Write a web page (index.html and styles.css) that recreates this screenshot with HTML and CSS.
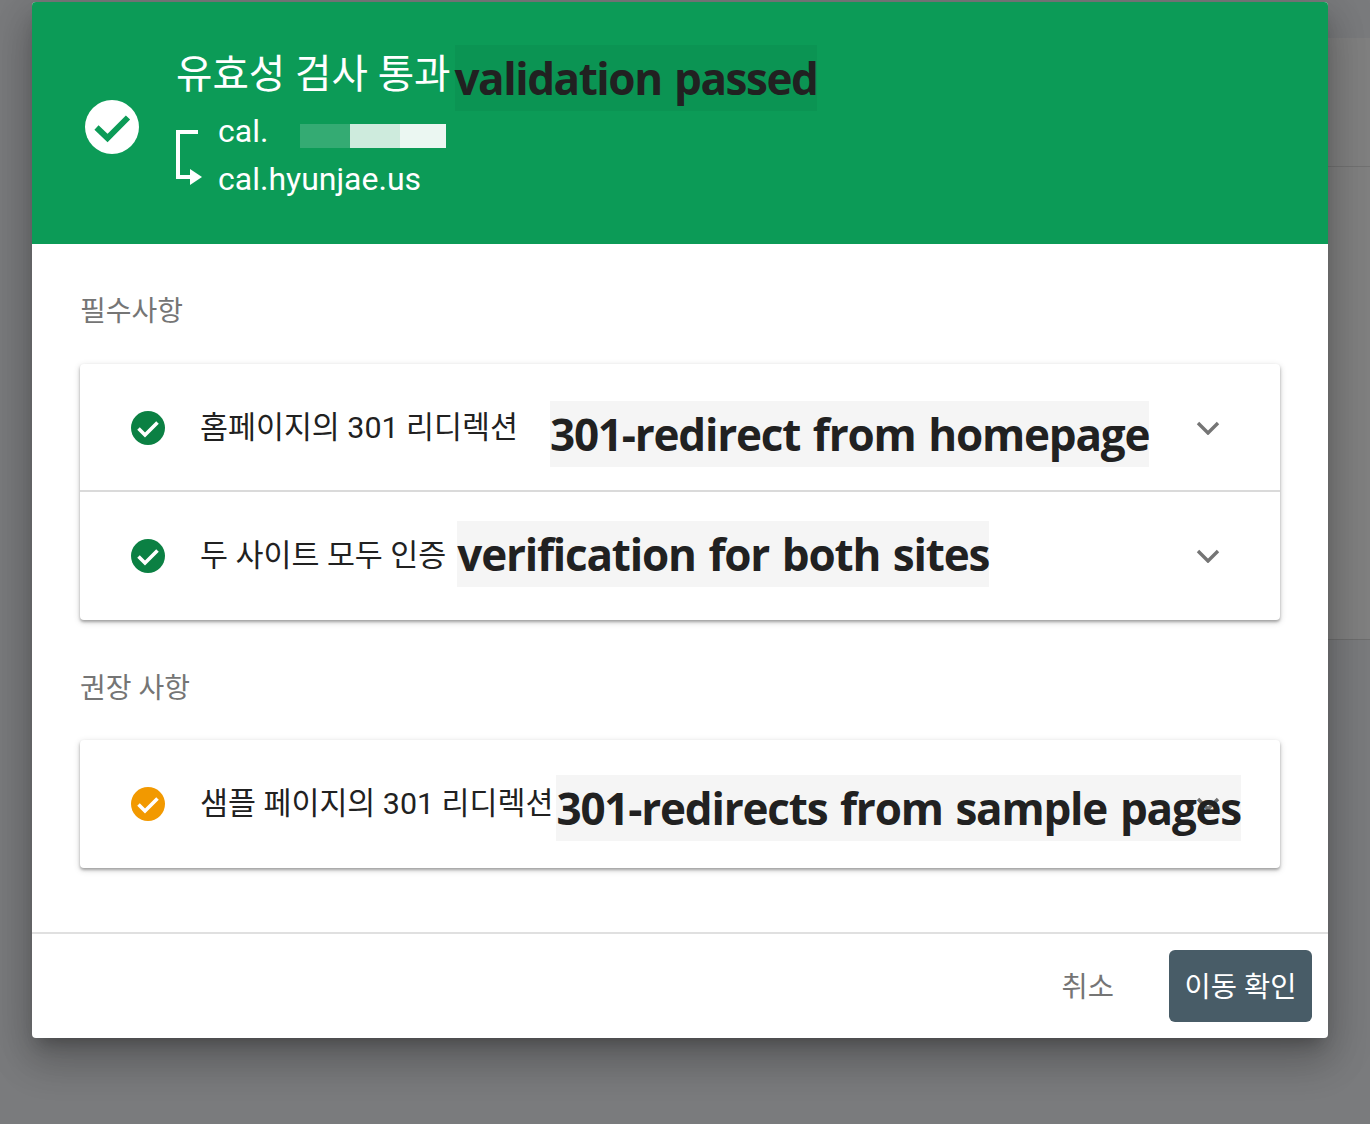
FILE: index.html
```html
<!DOCTYPE html>
<html lang="ko">
<head>
    <meta charset="UTF-8">
    <title>유효성 검사 통과</title>
    <link rel="stylesheet" href="styles.css">
</head>
<body>
    <div class="back-page"></div>
    <div class="dialog">
        <div class="dialog-head">
            <svg class="head-check" width="54" height="54" viewBox="0 0 54 54">
                <circle cx="27" cy="27" r="27" fill="#fff"/>
                <path d="M11.5 27.5 L22.5 38 L43 17.5" fill="none" stroke="#0c9b57" stroke-width="6"/>
            </svg>
            <div class="head-text">
                <div class="head-title">유효성 검사 통과<span class="tr tr-title">validation passed</span></div>
                <div class="head-sites">
                    <svg class="move-arrow" width="28" height="56" viewBox="0 0 28 56">
                        <path d="M22 2 H2 V47 H16" fill="none" stroke="#fff" stroke-width="4"/>
                        <path d="M14 39 L26 47 L14 55 Z" fill="#fff"/>
                    </svg>
                    <div class="site-names">
                        <div class="site-old">cal.<span class="blur-box"><i class="blur-a"></i><i class="blur-b"></i><i class="blur-c"></i></span></div>
                        <div>cal.hyunjae.us</div>
                    </div>
                </div>
            </div>
        </div>

        <div class="dialog-body">
            <div class="section-label">필수사항</div>
            <div class="card">
                <div class="row">
                    <svg class="row-icon" width="34" height="34" viewBox="0 0 34 34">
                        <circle cx="17" cy="17" r="17" fill="#0b8043"/>
                        <path d="M7.5 17.5 L14 24 L26.5 11.5" fill="none" stroke="#fff" stroke-width="3.6"/>
                    </svg>
                    <span class="row-text">홈페이지의 301 리디렉션</span>
                    <span class="tr tr-one">301-redirect from homepage</span>
                    <svg class="chevron" width="24" height="14" viewBox="0 0 24 14">
                        <path d="M2 2 L12 12 L22 2" fill="none" stroke="#757575" stroke-width="3.4"/>
                    </svg>
                </div>
                <div class="row row-second">
                    <svg class="row-icon" width="34" height="34" viewBox="0 0 34 34">
                        <circle cx="17" cy="17" r="17" fill="#0b8043"/>
                        <path d="M7.5 17.5 L14 24 L26.5 11.5" fill="none" stroke="#fff" stroke-width="3.6"/>
                    </svg>
                    <span class="row-text">두 사이트 모두 인증</span>
                    <span class="tr tr-two">verification for both sites</span>
                    <svg class="chevron" width="24" height="14" viewBox="0 0 24 14">
                        <path d="M2 2 L12 12 L22 2" fill="none" stroke="#757575" stroke-width="3.4"/>
                    </svg>
                </div>
            </div>

            <div class="section-label section-second">권장 사항</div>
            <div class="card">
                <div class="row">
                    <svg class="row-icon" width="34" height="34" viewBox="0 0 34 34">
                        <circle cx="17" cy="17" r="17" fill="#f29900"/>
                        <path d="M7.5 17.5 L14 24 L26.5 11.5" fill="none" stroke="#fff" stroke-width="3.6"/>
                    </svg>
                    <span class="row-text">샘플 페이지의 301 리디렉션</span>
                    <span class="tr tr-three">301-redirects from sample pages</span>
                    <svg class="chevron" width="24" height="14" viewBox="0 0 24 14">
                        <path d="M2 2 L12 12 L22 2" fill="none" stroke="#757575" stroke-width="3.4"/>
                    </svg>
                </div>
            </div>
        </div>

        <div class="dialog-foot">
            <button class="btn-cancel">취소</button>
            <button class="btn-confirm">이동 확인</button>
        </div>
    </div>
</body>
</html>
```

FILE: styles.css
```css
body {
    font-family: Roboto, "Noto Sans CJK KR", sans-serif;
    margin: 0;
    height: 1124px;
    overflow: hidden;
    background-color: #7a7b7d;
    position: relative;
}

.back-page {
    position: absolute;
    top: 38px;
    right: 0;
    width: 300px;
    height: 602px;
    background-color: #808080;
    border-bottom: 1px solid #6e6e6e;
    box-sizing: border-box;
}

.back-page::before {
    content: "";
    display: block;
    margin-top: 128px;
    border-top: 1px solid #727272;
}

.dialog {
    position: absolute;
    top: 2px;
    left: 32px;
    width: 1296px;
    height: 1036px;
    background-color: #fff;
    border-radius: 4px;
    overflow: hidden;
    display: flex;
    flex-direction: column;
    box-shadow: 0 11px 15px -7px rgba(0, 0, 0, 0.24), 0 24px 38px 3px rgba(0, 0, 0, 0.16), 0 9px 46px 8px rgba(0, 0, 0, 0.12);
}

.dialog-head {
    height: 242px;
    flex-shrink: 0;
    background-color: #0c9b57;
    color: #fff;
    display: flex;
    align-items: flex-start;
    padding-left: 53px;
    box-sizing: border-box;
}

.head-check {
    margin-top: 98px;
    flex-shrink: 0;
}

.head-text {
    margin-left: 37px;
    padding-top: 33px;
}

.head-title {
    display: flex;
    align-items: center;
    font-size: 39.6px;
    line-height: 66px;
    white-space: nowrap;
    padding-top: 4px;
}

.head-sites {
    display: flex;
    font-size: 32px;
    line-height: 48px;
    margin-top: -4px;
}

.move-arrow {
    margin-top: 23px;
    margin-right: 14px;
    flex-shrink: 0;
}

.site-old {
    display: flex;
    align-items: center;
    height: 48px;
}

.blur-box {
    display: flex;
    height: 24px;
    margin-left: 32px;
    margin-top: 10px;
}

.blur-box i {
    display: block;
    height: 24px;
}

.blur-a {
    width: 50px;
    background-color: rgba(255, 255, 255, 0.17);
}

.blur-b {
    width: 50px;
    background-color: rgba(255, 255, 255, 0.8);
}

.blur-c {
    width: 46px;
    background-color: rgba(255, 255, 255, 0.92);
}

/* the pasted translation labels */
.tr {
    display: block;
    font-family: "Open Sans", sans-serif;
    font-weight: 700;
    font-size: 44px;
    letter-spacing: -1.2px;
    word-spacing: 2.5px;
    line-height: 66px;
    color: #212121;
    background-color: rgba(0, 0, 0, 0.04);
    white-space: nowrap;
    flex-shrink: 0;
    position: relative;
    z-index: 1;
}

.tr-title {
    margin-left: 4px;
    margin-top: 6px;
    letter-spacing: -1.45px;
}

.tr-one {
    margin-left: 32px;
    margin-top: 12px;
}

.tr-two {
    margin-left: 11px;
    margin-top: -4px;
}

.tr-three {
    margin-left: 3px;
    margin-top: 8px;
}

.dialog-body {
    flex: 1;
    padding: 0 48px;
}

.section-label {
    font-size: 28px;
    line-height: 40px;
    color: #757575;
    margin-top: 48px;
    margin-bottom: 32px;
}

.section-second {
    margin-top: 49px;
    margin-bottom: 31px;
}

.card {
    background-color: #fff;
    border-radius: 4px;
    box-shadow: 0 2px 3px rgba(0, 0, 0, 0.3), 0 2px 6px 1px rgba(0, 0, 0, 0.12);
}

.row {
    height: 128px;
    display: flex;
    align-items: center;
    padding-left: 51px;
    box-sizing: border-box;
    position: relative;
}

.row-second {
    height: 130px;
    margin-top: -2px;
    border-top: 2px solid #dadada;
}

.row-icon {
    flex-shrink: 0;
    margin-right: 35px;
}

.row-text {
    font-size: 30.4px;
    color: #212121;
    white-space: nowrap;
    margin-top: -6px;
}

.chevron {
    position: absolute;
    right: 60px;
    top: 57px;
}

.dialog-foot {
    height: 106px;
    flex-shrink: 0;
    border-top: 2px solid #e0e0e0;
    box-sizing: border-box;
    display: flex;
    justify-content: flex-end;
    align-items: flex-start;
    padding: 16px 16px 0 0;
}

.dialog-foot button {
    font-family: Roboto, "Noto Sans CJK KR", sans-serif;
    font-size: 28.5px;
    border: none;
    height: 72px;
    border-radius: 6px;
    padding: 0 0 4px;
}

.btn-cancel {
    background: none;
    color: #757575;
    margin-right: 55px;
}

.btn-confirm {
    width: 143px;
    background-color: #485c67;
    color: #fff;
}
```
